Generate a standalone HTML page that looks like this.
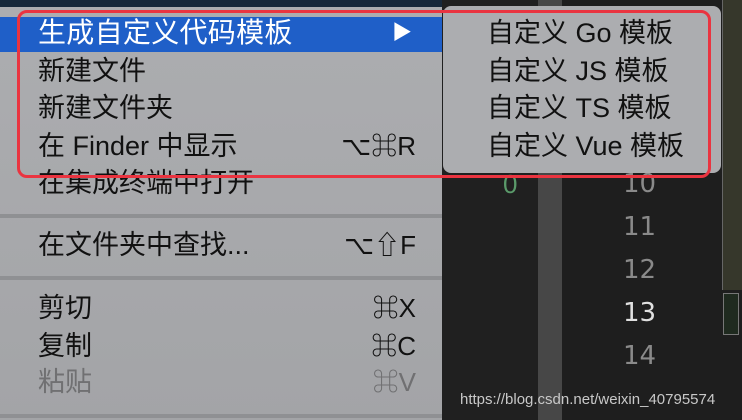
<!DOCTYPE html>
<html><head><meta charset="utf-8"><style>
*{margin:0;padding:0;box-sizing:border-box}
body{width:742px;height:420px;overflow:hidden;background:#1e1e1e;position:relative;font-family:"Liberation Sans","Noto Sans CJK SC",sans-serif}
.a{position:absolute}
.menu{left:0;top:0;width:442px;height:420px;background:linear-gradient(#acadb0,#a3a4a7)}
.t{position:absolute;font-size:27px;line-height:32px;color:#111;white-space:nowrap;z-index:2}
.k{position:absolute;left:0;width:416px;text-align:right;font-size:26px;line-height:32px;color:#111;z-index:2}
.sep{position:absolute;left:0;width:442px;height:4px;background:#8f9093}
.sub{left:443px;top:6px;width:278px;height:167px;background:#acadb0;border-radius:8px;z-index:1}
.num{position:absolute;left:623px;font-size:26px;color:#8a8a8a;font-family:"DejaVu Sans",sans-serif}
</style></head><body>
<div class="a" style="left:0;top:0;width:442px;height:7px;background:#17283a"></div>
<div class="a menu" style="top:7px;height:413px"></div>
<div class="a" style="left:0;top:17px;width:442px;height:35px;background:#1f5fc8"></div>
<div class="t" style="left:38px;top:17px;color:#fff;font-size:28px;letter-spacing:0.3px">生成自定义代码模板</div>
<div class="t" style="left:392px;top:17px;color:#fff;font-size:20px">▶</div>
<div class="t" style="left:38px;top:55px">新建文件</div>
<div class="t" style="left:38px;top:92px">新建文件夹</div>
<div class="t" style="left:38px;top:130px">在 Finder 中显示</div><div class="k" style="top:130px">⌥⌘R</div>
<div class="t" style="left:38px;top:167px">在集成终端中打开</div>
<div class="sep" style="top:214px"></div>
<div class="t" style="left:38px;top:229px">在文件夹中查找...</div><div class="k" style="top:229px">⌥⇧F</div>
<div class="sep" style="top:276px"></div>
<div class="t" style="left:38px;top:292px">剪切</div><div class="k" style="top:292px">⌘X</div>
<div class="t" style="left:38px;top:330px">复制</div><div class="k" style="top:330px">⌘C</div>
<div class="t" style="left:38px;top:366px;color:#707072">粘贴</div><div class="k" style="top:366px;color:#707072">⌘V</div>
<div class="sep" style="top:414px"></div>
<div class="a" style="left:442px;top:0;width:96px;height:420px;background:#202020"></div>
<div class="a" style="left:538px;top:0;width:24px;height:420px;background:#474747"></div>
<div class="a" style="left:562px;top:0;width:160px;height:420px;background:#1e1e1e"></div>
<div class="a" style="left:722px;top:0;width:20px;height:290px;background:#36372b;border-left:1px solid #666"></div>
<div class="a" style="left:723px;top:293px;width:16px;height:42px;background:#1f2a1f;border:1px solid #777"></div>
<div class="a" style="left:503px;top:169px;font-size:26px;color:#5a9a6a">0</div>
<div class="num" style="top:169px">10</div>
<div class="num" style="top:212px">11</div>
<div class="num" style="top:255px">12</div>
<div class="num" style="top:298px;color:#e0e0e0">13</div>
<div class="num" style="top:341px">14</div>
<div class="a" style="left:460px;top:391px;font-size:15px;color:#c8c8c8">https://blog.csdn.net/weixin_40795574</div>
<div class="a sub"></div>
<div class="t" style="left:487px;top:17px">自定义 Go 模板</div>
<div class="t" style="left:487px;top:55px">自定义 JS 模板</div>
<div class="t" style="left:487px;top:92px">自定义 TS 模板</div>
<div class="t" style="left:487px;top:130px">自定义 Vue 模板</div>
<div class="a" style="left:17px;top:10px;width:694px;height:168px;border:3px solid #ea3440;border-radius:10px;z-index:3"></div>
</body></html>
